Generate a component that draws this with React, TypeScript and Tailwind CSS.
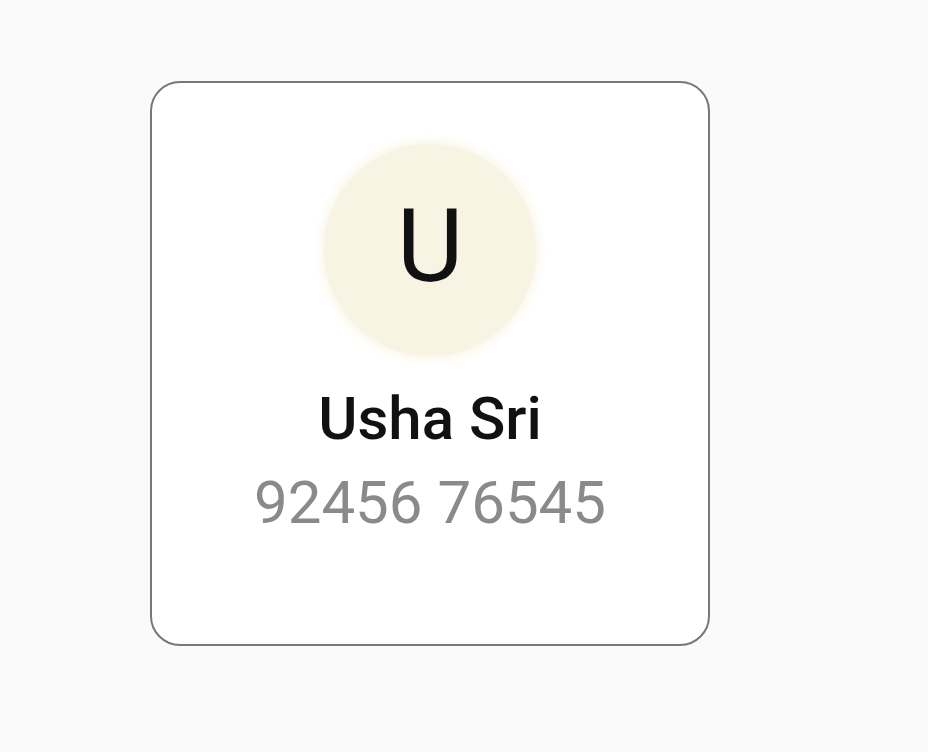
export default function App() {
  return (
    <div className="min-h-screen bg-[#fafafa] pt-[81px] pl-[150px]" style={{ fontFamily: 'Roboto, "Liberation Sans", sans-serif' }}>
      <div className="w-[560px] h-[565px] rounded-[30px] border-2 border-[#777] bg-white flex flex-col items-center pt-[61px]">
        <div className="size-[212px] rounded-full bg-[#f8f4e3] shadow-[0_0_10px_4px_#faf7ea] flex items-center justify-center pb-[8px]">
          <span className="text-[102px] leading-none text-[#111]">U</span>
        </div>
        <div className="mt-[33px] text-[60px] leading-none font-medium text-[#111]">Usha Sri</div>
        <div className="mt-[24px] text-[60px] leading-none text-[#8a8a8a]">92456 76545</div>
      </div>
    </div>
  );
}
